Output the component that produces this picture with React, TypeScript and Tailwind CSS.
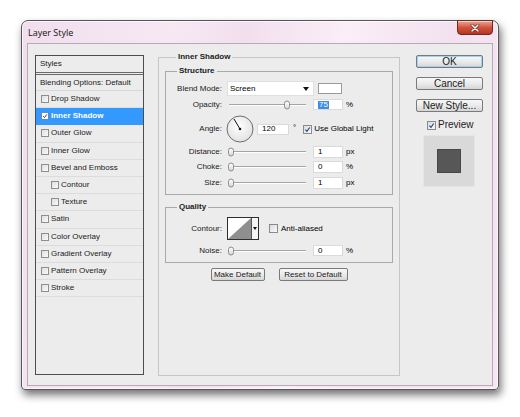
import React from 'react';

function CheckMark() {
  return (
    <svg viewBox="0 0 10 10" className="w-full h-full">
      <path d="M2 5.2 L4.2 7.6 L8.2 2.2" fill="none" stroke="#1f3f8f" strokeWidth="1.6" />
    </svg>
  );
}

function SmallBox({ checked = false }: { checked?: boolean }) {
  return (
    <div className="w-[8px] h-[8px] shrink-0 border border-[#8e8e8e] bg-gradient-to-br from-[#dedede] to-[#fbfbfb]">
      {checked && <CheckMark />}
    </div>
  );
}

function Box({ checked = false }: { checked?: boolean }) {
  return (
    <div className="w-[9px] h-[9px] shrink-0 border border-[#8a8a8a] bg-gradient-to-br from-[#dcdcdc] to-[#fafafa]">
      {checked && <CheckMark />}
    </div>
  );
}

function Slider({ pos }: { pos: number }) {
  return (
    <div className="relative w-[77px] h-full flex items-center">
      <div className="w-full h-[2px] border-t border-t-[#a4a4a4] border-b border-b-white" />
      {/* thumb over the track */}
      <div
        className="absolute top-1/2 -translate-y-1/2 w-[6px] h-[9px] rounded-[3px] border border-[#8c8c8c] bg-gradient-to-b from-white to-[#d8d8d8]"
        style={{ left: pos - 3 }}
      />
    </div>
  );
}

function Field({ value, selected = false, w = 'w-[30px]' }: { value: string; selected?: boolean; w?: string }) {
  return (
    <div className={`${w} h-full bg-white border border-[#dadada] flex items-center pl-[4px] text-[8px] leading-none`}>
      {selected ? <span className="bg-[#3a8ee6] text-white px-[1px]">{value}</span> : value}
    </div>
  );
}

function Label({ children }: { children: React.ReactNode }) {
  return <span className="w-[56px] shrink-0 text-right text-[8px] leading-none text-[#1b1b1b]">{children}</span>;
}

function Button({ children, className = '' }: { children: React.ReactNode; className?: string }) {
  return (
    <div
      className={`h-[13px] flex items-center justify-center rounded-[2px] border border-[#7a7a7a] bg-gradient-to-b from-[#f7f7f7] via-[#ebebeb] to-[#d5d5d5] text-[8px] leading-none text-[#1b1b1b] ${className}`}
    >
      {children}
    </div>
  );
}

const styleRows: { name: string; indent?: boolean; active?: boolean }[] = [
  { name: 'Drop Shadow' },
  { name: 'Inner Shadow', active: true },
  { name: 'Outer Glow' },
  { name: 'Inner Glow' },
  { name: 'Bevel and Emboss' },
  { name: 'Contour', indent: true },
  { name: 'Texture', indent: true },
  { name: 'Satin' },
  { name: 'Color Overlay' },
  { name: 'Gradient Overlay' },
  { name: 'Pattern Overlay' },
  { name: 'Stroke' },
];

export default function App() {
  return (
    <div className="w-[520px] h-[417px] bg-white pl-[21px] pt-[20px] font-['Liberation_Sans',Arial,sans-serif] text-black">
      {/* window */}
      <div className="w-[478px] h-[370px] flex flex-col rounded-t-[7px] rounded-b-[4px] border border-[#585458] bg-[linear-gradient(100deg,#f1deed_0%,#f7e8f4_28%,#f2dfee_42%,#faeef8_60%,#f3e1ef_80%,#f6e6f3_100%)] shadow-[inset_0_0_0_1px_rgba(255,255,255,0.7),2px_5px_9px_rgba(0,0,0,0.55)] px-[5px] pb-[3px]">
        {/* title bar */}
        <div className="h-[22px] flex items-start justify-between">
          <span className="mt-[6px] ml-[1px] text-[9px] leading-[11px] text-[#111] font-['Open_Sans','Liberation_Sans',sans-serif]">
            Layer Style
          </span>
          <div className="-mt-[1px] w-[36px] h-[15px] rounded-b-[4px] border border-[#6b2a22] bg-gradient-to-b from-[#eaa596] via-[#d0553f] to-[#b8321f] flex items-center justify-center shadow-[inset_0_1px_0_rgba(255,255,255,0.5)]">
            <svg viewBox="0 0 10 8" className="w-[10px] h-[8px]">
              <path d="M2 1 L8 7 M8 1 L2 7" stroke="#5a1d16" strokeWidth="2.6" strokeLinecap="round" />
              <path d="M2 1 L8 7 M8 1 L2 7" stroke="#ffffff" strokeWidth="1.5" strokeLinecap="round" />
            </svg>
          </div>
        </div>

        {/* client area */}
        <div className="flex-1 bg-[#ececec] border border-[#b7aab5] flex items-start pl-[7px] pt-[11px]">
          {/* styles list */}
          <div className="w-[109px] h-[320px] border border-[#4d4d4d] flex flex-col text-[8px] leading-none text-[#1b1b1b]">
            <div className="h-[19px] shrink-0 border-b-[3px] border-double border-[#6a6a6a] flex items-center pl-[4px]">
              Styles
            </div>
            <div className="h-[16px] shrink-0 border-b border-[#d8d8d8] flex items-center pl-[4px]">
              Blending Options: Default
            </div>
            {styleRows.map((r) => (
              <div
                key={r.name}
                className={`h-[17.2px] shrink-0 border-b flex items-center gap-[2px] ${r.indent ? 'pl-[15px]' : 'pl-[5px]'} ${
                  r.active ? 'bg-[#3399ff] border-[#3399ff] text-white font-bold' : 'border-[#dcdcdc]'
                }`}
              >
                {r.active ? (
                  <div className="w-[8px] h-[8px] shrink-0 border border-[#6d88b8] bg-white">
                    <CheckMark />
                  </div>
                ) : (
                  <SmallBox />
                )}
                <span>{r.name}</span>
              </div>
            ))}
          </div>

          {/* Inner Shadow group */}
          <fieldset className="ml-[14px] -mt-[3px] w-[242px] h-[324px] border border-[#c6c6c6] px-[6px]">
            <legend className="ml-[11px] px-[2px] text-[8px] leading-[10px] font-bold text-[#1b1b1b]">Inner Shadow</legend>

            {/* Structure */}
            <fieldset className="mt-[4px] h-[129px] border border-[#a9a9a9] flex flex-col">
              <legend className="ml-[11px] px-[2px] text-[8px] leading-[10px] font-bold text-[#1b1b1b]">Structure</legend>

              <div className="mt-[5px] h-[15px] flex items-center">
                <Label>Blend Mode:</Label>
                <div className="ml-[5px] w-[87px] h-full bg-white border border-[#e0e0e0] flex items-center justify-between pl-[2px] pr-[4px] text-[8px] leading-none">
                  Screen
                  <svg viewBox="0 0 6 4" className="w-[6px] h-[4px]">
                    <path d="M0 0 H6 L3 4 Z" fill="#111" />
                  </svg>
                </div>
                <div className="ml-[4px] w-[24px] h-[11px] bg-white border border-[#9a9a9a]" />
              </div>

              <div className="mt-[3px] h-[11px] flex items-center">
                <Label>Opacity:</Label>
                <div className="ml-[7px] h-full">
                  <Slider pos={58} />
                </div>
                <div className="ml-[7px] h-full">
                  <Field value="75" selected />
                </div>
                <span className="ml-[3px] text-[8px] leading-none">%</span>
              </div>

              <div className="mt-[5px] h-[28px] flex items-center">
                <Label>Angle:</Label>
                <svg viewBox="0 0 28 28" className="ml-[4px] w-[28px] h-[28px]">
                  <defs>
                    <radialGradient id="dial" cx="45%" cy="40%" r="60%">
                      <stop offset="0%" stopColor="#ffffff" />
                      <stop offset="100%" stopColor="#e2e2e2" />
                    </radialGradient>
                  </defs>
                  <circle cx="14" cy="14" r="13" fill="url(#dial)" stroke="#6e6e6e" strokeWidth="1" />
                  <path d="M14 14 L8 4" stroke="#111" strokeWidth="1" />
                  <circle cx="14" cy="14" r="1.3" fill="#111" />
                </svg>
                <div className="ml-[3px] h-[11px]">
                  <Field value="120" w="w-[32px]" />
                </div>
                <span className="ml-[4px] text-[8px] leading-none -mt-[3px]">°</span>
                <div className="ml-[7px]">
                  <Box checked />
                </div>
                <span className="ml-[2px] text-[8px] leading-none">Use Global Light</span>
              </div>

              {[
                { l: 'Distance:', v: '1', u: 'px', mt: 'mt-[3px]' },
                { l: 'Choke:', v: '0', u: '%', mt: 'mt-[3px]' },
                { l: 'Size:', v: '1', u: 'px', mt: 'mt-[4px]' },
              ].map((r) => (
                <div key={r.l} className={`${r.mt} h-[12px] flex items-center`}>
                  <Label>{r.l}</Label>
                  <div className="ml-[7px] h-full">
                    <Slider pos={2} />
                  </div>
                  <div className="ml-[7px] h-full">
                    <Field value={r.v} />
                  </div>
                  <span className="ml-[3px] text-[8px] leading-none">{r.u}</span>
                </div>
              ))}
            </fieldset>

            {/* Quality */}
            <fieldset className="mt-[7px] h-[61px] border border-[#a9a9a9] flex flex-col">
              <legend className="ml-[11px] px-[2px] text-[8px] leading-[10px] font-bold text-[#1b1b1b]">Quality</legend>

              <div className="mt-[5px] h-[23px] flex items-center">
                <Label>Contour:</Label>
                <div className="ml-[5px] h-full flex border border-[#2e2e2e] bg-white">
                  <svg viewBox="0 0 23 21" className="w-[23px] h-[21px]">
                    <path d="M0 21 L23 0 L23 21 Z" fill="#8f8f8f" />
                  </svg>
                  <div className="w-[7px] border-l border-[#555] flex items-center justify-center bg-[#f4f4f4]">
                    <svg viewBox="0 0 4 3" className="w-[4px] h-[3px]">
                      <path d="M0 0 H4 L2 3 Z" fill="#111" />
                    </svg>
                  </div>
                </div>
                <div className="ml-[10px]">
                  <Box />
                </div>
                <span className="ml-[3px] text-[8px] leading-none">Anti-aliased</span>
              </div>

              <div className="mt-[5px] h-[11px] flex items-center">
                <Label>Noise:</Label>
                <div className="ml-[7px] h-full">
                  <Slider pos={2} />
                </div>
                <div className="ml-[7px] h-full">
                  <Field value="0" />
                </div>
                <span className="ml-[3px] text-[8px] leading-none">%</span>
              </div>
            </fieldset>

            <div className="mt-[5px] flex justify-center gap-[14px]">
              <Button className="w-[54px]">Make Default</Button>
              <Button className="w-[69px]">Reset to Default</Button>
            </div>
          </fieldset>

          {/* right column */}
          <div className="ml-[16px] w-[67px] flex flex-col">
            <Button className="border-[#3c7fb1] shadow-[inset_0_0_0_1px_#9ed3f5] text-[10px]">OK</Button>
            <Button className="mt-[9px] text-[10px]">Cancel</Button>
            <Button className="mt-[9px] text-[10px]">New Style...</Button>
            <div className="mt-[8px] h-[10px] flex items-center pl-[11px]">
              <Box checked />
              <span className="ml-[2px] text-[10px] leading-none text-[#1b1b1b]">Preview</span>
            </div>
            <div className="mt-[5px] ml-[7px] w-[52px] h-[52px] bg-[#d9d9d9] border border-[#e6e6e6] flex items-center justify-center">
              <div className="w-[24px] h-[24px] bg-[#575757] border border-[#474747]" />
            </div>
          </div>
        </div>
      </div>
    </div>
  );
}
